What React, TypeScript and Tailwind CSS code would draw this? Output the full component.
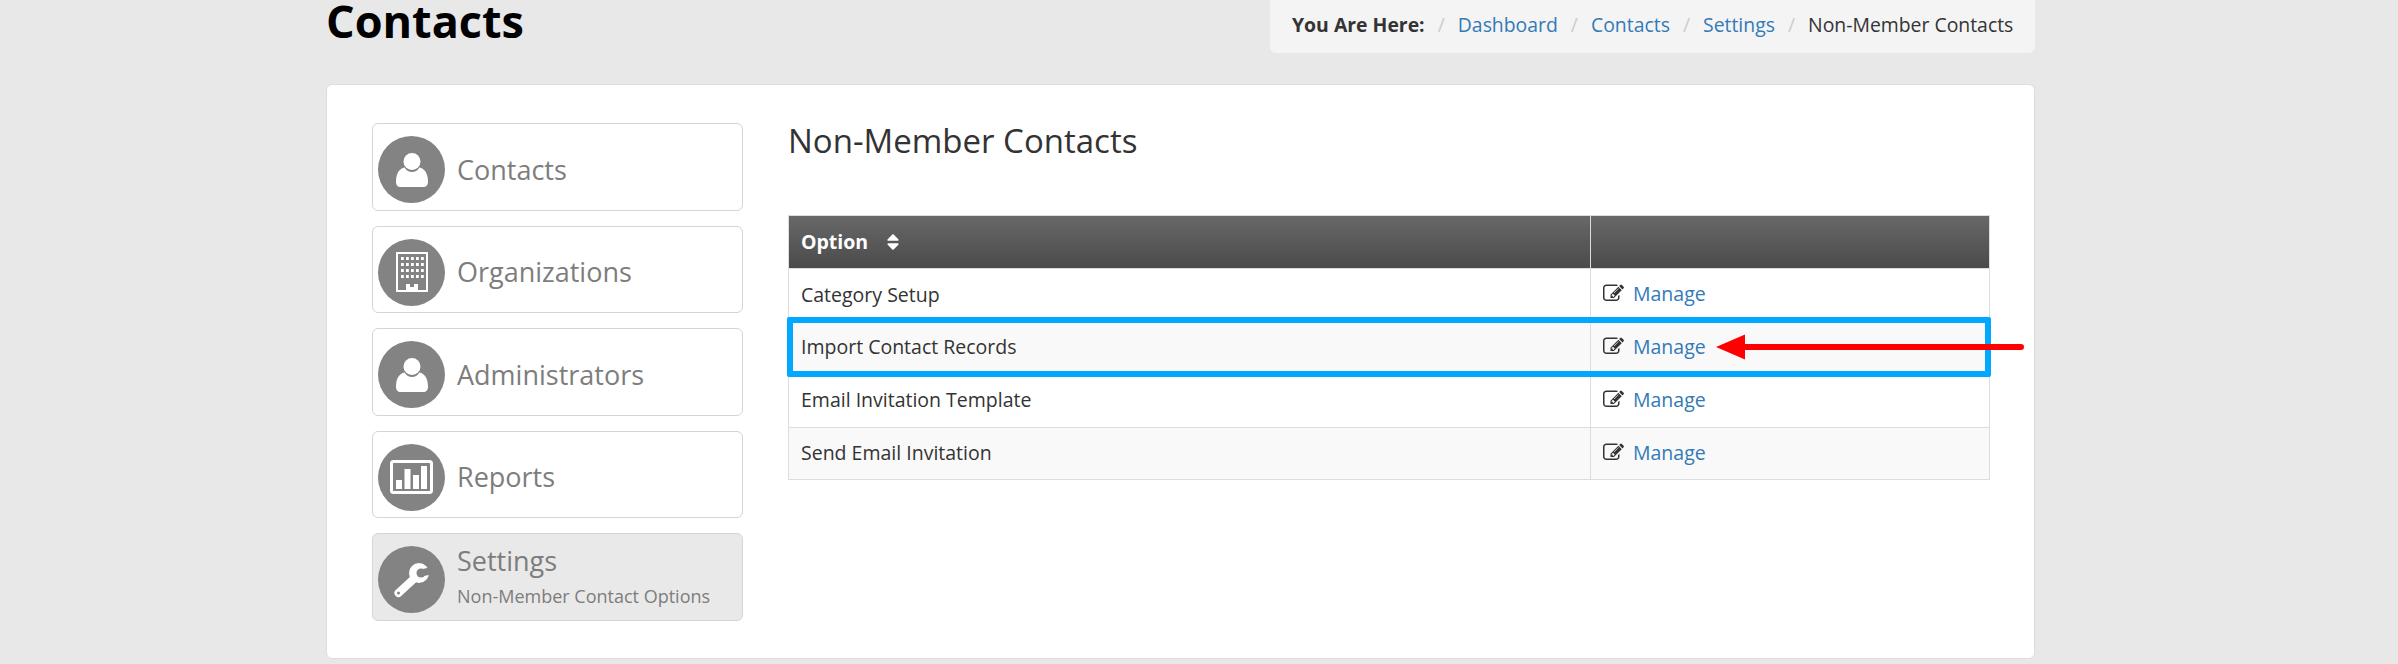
import React from "react";
import { FaSort } from "react-icons/fa";

const UserIcon = () => (
  <svg width="34" height="36" viewBox="0 0 34 36" fill="#fff">
    <circle cx="17" cy="9.5" r="8.5" />
    <path d="M9.5 15.5C11.5 18.5 14 20 17 20s5.500-1.500 7.500-4.500C29.500 16.500 33 21 33 30c0 3-2 5-4.500 5h-23C3 35 1 33 1 30c0-9 3.500-13.500 8.500-14.500z" />
  </svg>
);

const BuildingIcon = () => (
  <svg width="32" height="40" viewBox="0 0 32 40">
    <rect x="0" y="0" width="32" height="40" fill="#fff" />
    <rect x="2" y="2" width="28" height="36" fill="#838383" />
    <g fill="#fff">
      {[5, 11, 17, 23].map((y) =>
        [5, 10, 15, 20, 25].map((x) => <rect key={`${x}-${y}`} x={x} y={y} width="2.800" height="3" />)
      )}
      <path d="M10 38v-6h4v3h4v-3h4v6z" />
    </g>
  </svg>
);

const ReportIcon = () => (
  <svg width="43" height="34" viewBox="0 0 43 34">
    <rect x="1.500" y="1.500" width="40" height="31" rx="2" fill="none" stroke="#fff" strokeWidth="3" />
    <g fill="#fff">
      <rect x="6" y="20" width="6" height="9" />
      <rect x="14.500" y="9" width="6" height="20" />
      <rect x="23" y="15" width="6" height="14" />
      <rect x="31" y="6" width="6" height="23" />
    </g>
  </svg>
);

const WrenchIcon = () => (
  <svg width="40" height="40" viewBox="0 0 40 40">
    <line x1="26" y1="15" x2="6.500" y2="33" stroke="#fff" strokeWidth="8" strokeLinecap="round" />
    <circle cx="27" cy="13" r="10" fill="#fff" />
    <circle cx="29" cy="13" r="4.500" fill="#838383" />
    <rect x="29" y="9.500" width="12" height="7" fill="#838383" transform="rotate(-12 29 13)" />
    <circle cx="6.500" cy="33" r="1.500" fill="#838383" />
  </svg>
);

const EditIcon = () => (
  <svg width="21" height="21" viewBox="0 0 1792 1792" fill="#333">
    <path d="M888 1184l116-116-152-152-116 116v56h96v96h56zm440-720q-16-16-33 1l-350 350q-17 17-1 33t33-1l350-350q17-17 1-33zm80 594v190q0 119-84.500 203.500t-203.500 84.500h-832q-119 0-203.500-84.500t-84.500-203.500v-832q0-119 84.500-203.500t203.500-84.500h832q63 0 117 25 15 7 18 23 3 17-9 29l-49 49q-14 14-32 8-23-6-45-6h-832q-66 0-113 47t-47 113v832q0 66 47 113t113 47h832q66 0 113-47t47-113v-126q0-13 9-22l64-64q15-15 35-7t20 29zm-96-738l288 288-672 672h-288v-288zm444 132l-92 92-288-288 92-92q28-28 68-28t68 28l152 152q28 28 28 68t-28 68z" />
  </svg>
);

type Item = { label: string; icon: React.ReactNode; sub?: string };

const items: Item[] = [
  { label: "Contacts", icon: <UserIcon /> },
  { label: "Organizations", icon: <BuildingIcon /> },
  { label: "Administrators", icon: <UserIcon /> },
  { label: "Reports", icon: <ReportIcon /> },
  { label: "Settings", icon: <WrenchIcon />, sub: "Non-Member Contact Options" },
];

const rows = ["Category Setup", "Import Contact Records", "Email Invitation Template", "Send Email Invitation"];

export default function App() {
  return (
    <div className="h-[664px] overflow-hidden bg-[#e8e8e8] font-['Open_Sans',sans-serif]">
      <div className="ml-[326px] w-[1709px]">
        <div className="flex h-[84px] items-start justify-between">
          <h1 className="text-[45px] leading-[42px] font-bold text-black">Contacts</h1>
          <div className="flex h-[53px] w-[765px] items-center gap-[13px] rounded-b-md bg-[#f4f4f4] pb-[3px] pl-[22px] text-[19.400px] text-[#333]">
            <span className="font-bold">You Are Here:</span>
            <span className="text-[#ccc]">/</span>
            <a className="text-[#337ab7]">Dashboard</a>
            <span className="text-[#ccc]">/</span>
            <a className="text-[#337ab7]">Contacts</a>
            <span className="text-[#ccc]">/</span>
            <a className="text-[#337ab7]">Settings</a>
            <span className="text-[#ccc]">/</span>
            <span>Non-Member Contacts</span>
          </div>
        </div>

        <div className="flex h-[575px] rounded-md border border-[#ddd] bg-white pt-[38px] pl-[45px]">
          <div className="flex w-[371px] shrink-0 flex-col gap-[15px]">
            {items.map((it) => (
              <div
                key={it.label}
                className={`flex h-[87.500px] items-center gap-[12px] rounded-md border border-[#d5d5d5] pl-[5px] ${it.sub ? "bg-[#e9e9e9]" : "bg-white"}`}
              >
                <div className="mt-[6px] flex h-[67px] w-[67px] shrink-0 items-center justify-center rounded-full bg-[#838383]">{it.icon}</div>
                <div className="text-[#7d7d7d]">
                  <div className={`text-[27px] leading-[36px] ${it.sub ? "mt-[-3px]" : "mt-[6px]"}`}>{it.label}</div>
                  {it.sub && <div className="mt-[5px] text-[18px] leading-[24px]">{it.sub}</div>}
                </div>
              </div>
            ))}
          </div>

          <div className="ml-[45px] w-[1202px]">
            <h2 className="text-[33px] leading-[36px] text-[#333]">Non-Member Contacts</h2>
            <div className="relative mt-[56px]">
              <table className="w-[1202px] table-fixed border-collapse text-[19.500px] text-[#333]">
                <thead>
                  <tr className="h-[53px] bg-gradient-to-b from-[#686868] to-[#4a4a4a] text-left text-white">
                    <th className="w-[802px] border border-[#ddd] px-[12px] font-bold">
                      <span className="inline-flex items-center gap-[15px]">
                        Option <FaSort size={20} />
                      </span>
                    </th>
                    <th className="border border-[#ddd]"></th>
                  </tr>
                </thead>
                <tbody>
                  {rows.map((r, i) => (
                    <tr key={r} className={`${i === 3 ? "h-[52px]" : "h-[53px]"} ${i % 2 ? "bg-[#f9f9f9]" : "bg-white"}`}>
                      <td className={`border border-[#ddd] px-[12px] ${i === 0 ? "" : "pb-[2px]"}`}>{r}</td>
                      <td className={`border border-[#ddd] px-[12px] ${i === 2 ? "" : "pt-[1px]"}`}>
                        <span className="inline-flex items-center gap-[9px]">
                          <EditIcon />
                          <a className="text-[#337ab7]">Manage</a>
                        </span>
                      </td>
                    </tr>
                  ))}
                </tbody>
              </table>
              <div className="absolute top-[102px] left-[-1px] h-[60px] w-[1204px] rounded-[2px] border-[6px] border-[#00a8ff]"></div>
              <svg className="absolute top-[118px] left-[928px]" width="308" height="28" viewBox="0 0 308 28">
                <path d="M29 11h276a3 3 0 0 1 0 6H29z" fill="#ff0000" />
                <path d="M0 14L29 1.500V26.500z" fill="#ff0000" />
              </svg>
            </div>
          </div>
        </div>
      </div>
    </div>
  );
}
